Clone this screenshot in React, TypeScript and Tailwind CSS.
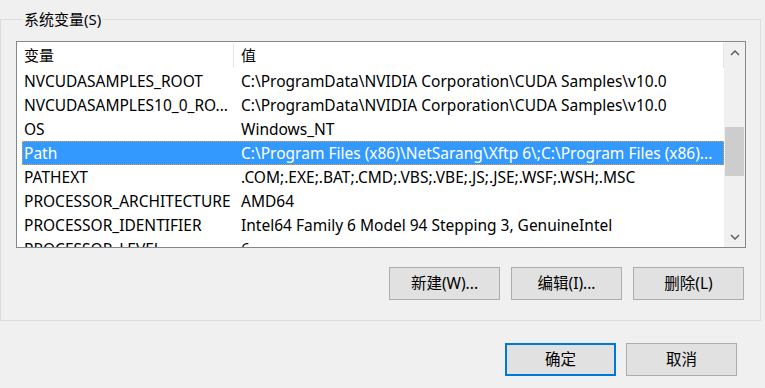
import React from "react";

const rows: [string, string][] = [
  ["NVCUDASAMPLES_ROOT", "C:\\ProgramData\\NVIDIA Corporation\\CUDA Samples\\v10.0"],
  ["NVCUDASAMPLES10_0_RO...", "C:\\ProgramData\\NVIDIA Corporation\\CUDA Samples\\v10.0"],
  ["OS", "Windows_NT"],
  ["Path", "C:\\Program Files (x86)\\NetSarang\\Xftp 6\\;C:\\Program Files (x86)..."],
  ["PATHEXT", ".COM;.EXE;.BAT;.CMD;.VBS;.VBE;.JS;.JSE;.WSF;.WSH;.MSC"],
  ["PROCESSOR_ARCHITECTURE", "AMD64"],
  ["PROCESSOR_IDENTIFIER", "Intel64 Family 6 Model 94 Stepping 3, GenuineIntel"],
  ["PROCESSOR_LEVEL", "6"],
];

function Btn({ children, primary }: { children: React.ReactNode; primary?: boolean }) {
  return (
    <div
      className={
        "flex items-center justify-center w-[111px] h-[33px] bg-[#e1e1e1] text-[15.5px] text-black " +
        (primary ? "border-2 border-[#0078d7]" : "border border-[#adadad]")
      }
    >
      {children}
    </div>
  );
}

export default function App() {
  return (
    <div
      className="w-[765px] h-[388px] bg-[#f0f0f0] overflow-hidden text-black"
      style={{ fontFamily: '"Noto Sans", "Noto Sans CJK SC", sans-serif' }}
    >
      <fieldset className="w-[761px] h-[312px] mt-[9px] border border-[#dcdcdc] pl-[15px] pr-[14px] pb-[20px] flex flex-col">
        <legend className="ml-[6px] px-[2px] text-[15px] leading-[20px]">系统变量(S)</legend>
        <div className="mt-[12px] h-[207px] border border-[#828790] bg-white flex">
          <div className="flex-1 overflow-hidden flex flex-col">
            <div className="h-[27px] shrink-0 flex items-stretch text-[15px]">
              <div className="w-[217px] pl-[7px] flex items-center border-r border-[#e5e5e5] my-[1px]">变量</div>
              <div className="flex-1 pl-[7px] flex items-center border-r border-[#e5e5e5] my-[1px]">值</div>
            </div>
            {rows.map(([k, v], i) => {
              const sel = k === "Path";
              return (
                <div
                  key={i}
                  className={
                    "h-[24px] shrink-0 ml-[5px] flex items-center pt-[1px] text-[15.5px] whitespace-nowrap " +
                    (sel ? "bg-[#3399ff] text-white border border-dotted border-[#e8a040]" : "border border-transparent")
                  }
                >
                  <div className="w-[211px] pl-[1px] overflow-hidden">{k}</div>
                  <div className="flex-1 pl-[7px] overflow-hidden">{v}</div>
                </div>
              );
            })}
          </div>
          <div className="w-[21px] shrink-0 bg-[#f0f0f0] flex flex-col items-center">
            <div className="h-[21px] w-full flex items-center justify-center">
              <svg width="10" height="6" viewBox="0 0 10 6">
                <path d="M1 5 L5 1 L9 5" fill="none" stroke="#606060" strokeWidth="1.5" />
              </svg>
            </div>
            <div className="flex-1 w-full flex flex-col px-[1px]">
              <div className="h-[64px]" />
              <div className="h-[49px] bg-[#cdcdcd]" />
            </div>
            <div className="h-[21px] w-full flex items-center justify-center">
              <svg width="10" height="6" viewBox="0 0 10 6">
                <path d="M1 1 L5 5 L9 1" fill="none" stroke="#606060" strokeWidth="1.5" />
              </svg>
            </div>
          </div>
        </div>
        <div className="mt-[19px] mr-[2px] flex justify-end gap-[11px]">
          <Btn>新建(W)...</Btn>
          <Btn>编辑(I)...</Btn>
          <Btn>删除(L)</Btn>
        </div>
      </fieldset>
      <div className="mt-[22px] pr-[28px] flex justify-end gap-[10px]">
        <Btn primary>确定</Btn>
        <Btn>取消</Btn>
      </div>
    </div>
  );
}
